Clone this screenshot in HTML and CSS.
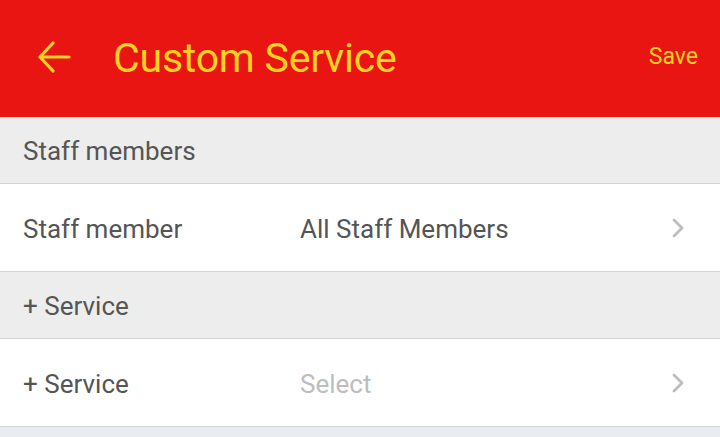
FILE: index.html
```html
<!DOCTYPE html>
<html>
<head>
<meta charset="utf-8">
<link rel="stylesheet" href="styles.css">
</head>
<body>
<header class="appbar">
  <span class="back">
    <svg width="34" height="32" viewBox="0 0 34 32"><path d="M32 16H3M16 2L3 16L16 30" fill="none" stroke="#ffd21f" stroke-width="3.2" stroke-linecap="round" stroke-linejoin="round"/></svg>
  </span>
  <h1 class="title">Custom Service</h1>
  <span class="save">Save</span>
</header>
<div class="section">Staff members</div>
<div class="row">
  <span class="label">Staff member</span>
  <span class="value">All Staff Members</span>
  <svg class="chev" width="14" height="22" viewBox="0 0 14 22"><path d="M3 3L11 11L3 19" fill="none" stroke="#bdbdbd" stroke-width="2.8" stroke-linecap="round" stroke-linejoin="round"/></svg>
</div>
<div class="section">+ Service</div>
<div class="row">
  <span class="label">+ Service</span>
  <span class="value placeholder">Select</span>
  <svg class="chev" width="14" height="22" viewBox="0 0 14 22"><path d="M3 3L11 11L3 19" fill="none" stroke="#bdbdbd" stroke-width="2.8" stroke-linecap="round" stroke-linejoin="round"/></svg>
</div>
<div class="footer"></div>
</body>
</html>
```
FILE: styles.css
```css
html, body { margin: 0; padding: 0; }
body {
  width: 720px;
  height: 437px;
  overflow: hidden;
  background: #e9ecf0;
  font-family: Roboto, "Noto Sans", sans-serif;
}
.appbar {
  height: 117px;
  background: #e81513;
  display: flex;
  align-items: center;
  color: #ffd21f;
}
.back {
  display: flex;
  margin-left: 37px;
  width: 34px;
  margin-top: -3px;
}
.title {
  margin: 0 0 0 42px;
  font-weight: 400;
  font-size: 41px;
  flex: 1;
  padding-bottom: 1px;
  letter-spacing: -0.2px;
}
.save {
  font-size: 23px;
  margin-right: 22px;
  margin-top: -4px;
}
.section {
  height: 67px;
  box-sizing: border-box;
  background: #ededed;
  border-bottom: 1px solid #d3d3d3;
  display: flex;
  align-items: center;
  padding-left: 23px;
  padding-top: 1px;
  font-size: 26px;
  color: #555;
}
.row {
  height: 88px;
  box-sizing: border-box;
  background: #fff;
  border-bottom: 1px solid #d3d3d3;
  display: flex;
  align-items: center;
  padding-left: 23px;
  padding-top: 2px;
  font-size: 26px;
  color: #555;
}
.label { width: 277px; }
.value { flex: 1; }
.placeholder { color: #bdbdbd; }
.chev { margin-right: 35px; margin-top: -2px; }
.footer { height: 20px; }
```
